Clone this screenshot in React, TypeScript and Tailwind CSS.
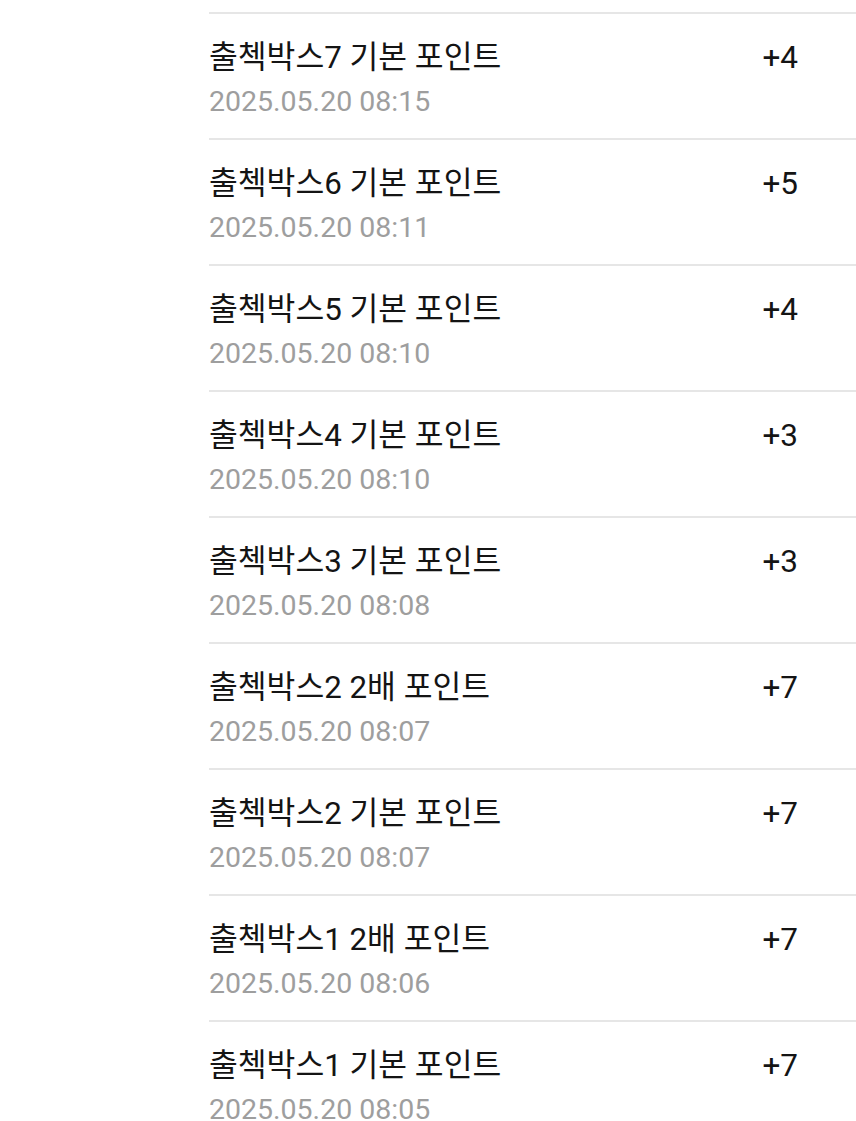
const rows = [
  { title: "출첵박스7 기본 포인트", time: "2025.05.20 08:15", pts: "+4" },
  { title: "출첵박스6 기본 포인트", time: "2025.05.20 08:11", pts: "+5" },
  { title: "출첵박스5 기본 포인트", time: "2025.05.20 08:10", pts: "+4" },
  { title: "출첵박스4 기본 포인트", time: "2025.05.20 08:10", pts: "+3" },
  { title: "출첵박스3 기본 포인트", time: "2025.05.20 08:08", pts: "+3" },
  { title: "출첵박스2 2배 포인트", time: "2025.05.20 08:07", pts: "+7" },
  { title: "출첵박스2 기본 포인트", time: "2025.05.20 08:07", pts: "+7" },
  { title: "출첵박스1 2배 포인트", time: "2025.05.20 08:06", pts: "+7" },
  { title: "출첵박스1 기본 포인트", time: "2025.05.20 08:05", pts: "+7" },
];

export default function App() {
  return (
    <div
      className="h-[1121px] w-[856px] overflow-hidden bg-white pt-[12px] pl-[209px]"
      style={{ fontFamily: "Roboto, 'Noto Sans CJK KR', sans-serif" }}
    >
      {rows.map((r, i) => (
        <div key={i} className="flex h-[126px] border-t-2 border-[#e6e6e6] pt-[24px] pr-[58px]">
          <div className="flex flex-1 flex-col">
            <div className="text-[31.3px] leading-[40px] text-[#141414]">{r.title}</div>
            <div className="mt-[6px] text-[28.5px] leading-[36px] text-[#9e9e9e]">{r.time}</div>
          </div>
          <div className="text-[31.5px] leading-[40px] text-[#141414]">{r.pts}</div>
        </div>
      ))}
    </div>
  );
}
